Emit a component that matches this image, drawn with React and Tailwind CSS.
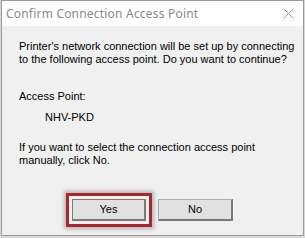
import React from "react";

export default function App() {
  return (
    <div className="w-[305px] h-[238px] bg-[#d8d8d8] overflow-hidden" style={{ fontFamily: '"Liberation Sans", Arial, sans-serif' }}>
      <div className="w-[303px] h-[236px] ml-px border border-[#9a9a9a] bg-[#f0f0f0] flex flex-col">
        <div className="h-[25px] bg-white flex items-center justify-between pl-[4px] pr-[9px]">
          <span className="text-[12px] text-[#8a8a8a] tracking-[0.2px]" style={{ fontFamily: '"Noto Sans", "Open Sans", sans-serif' }}>
            Confirm Connection Access Point
          </span>
          <svg width="11" height="11" viewBox="0 0 11 11">
            <path d="M0.5 0.5 L10.5 10.5 M10.5 0.5 L0.5 10.5" stroke="#9a9a9a" strokeWidth="1" />
          </svg>
        </div>
        <div className="flex-1 pl-[17px] pt-[14px] text-[11px] leading-[13px] text-black">
          <p>Printer's network connection will be set up by connecting</p>
          <p>to the following access point. Do you want to continue?</p>
          <p className="mt-[24px]">Access Point:</p>
          <p className="mt-[8px] pl-[26px]">NHV-PKD</p>
          <p className="mt-[17px]">If you want to select the connection access point</p>
          <p>manually, click No.</p>
          <div className="mt-[26px] flex items-center gap-[6px] ml-[47px]">
            <div className="border-[3px] border-[#a8262c] p-[3px] shadow-[0_0_4px_2px_rgba(0,0,0,0.25)]">
              <button className="w-[74px] h-[22px] bg-[#e1e1e1] border border-[#7a7a7a] border-r-2 border-b-2 text-[11px] text-black">Yes</button>
            </div>
            <button className="w-[75px] h-[22px] bg-[#e1e1e1] border border-[#adadad] border-r-2 border-b-2 border-r-[#7a7a7a] border-b-[#7a7a7a] text-[11px] text-black">No</button>
          </div>
        </div>
      </div>
    </div>
  );
}
